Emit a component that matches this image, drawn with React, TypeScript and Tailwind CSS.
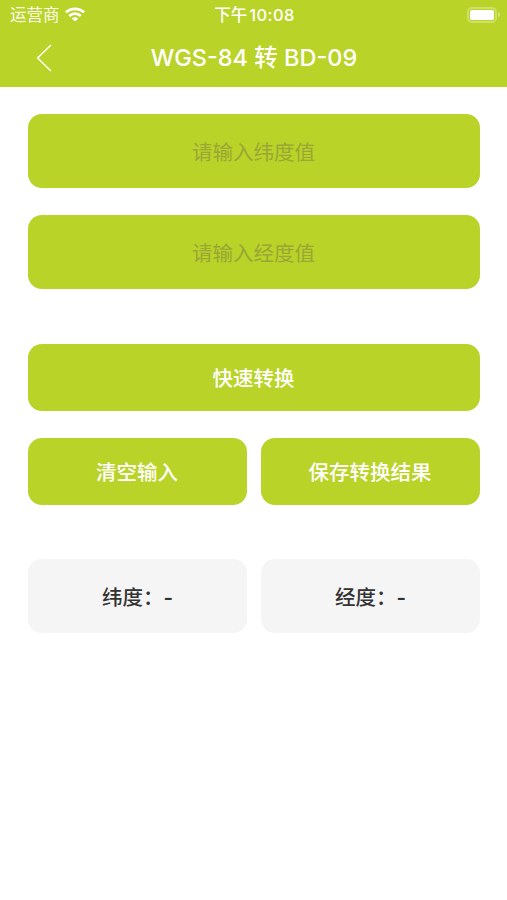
import type { ReactNode } from "react";

function WifiIcon() {
  return (
    <svg className="h-[15px] w-[20px]" viewBox="0 0 20 15" fill="none" stroke="white" strokeWidth="2.7">
      <path d="M0.9 5.3C6 0.6 14 0.6 19.1 5.3" />
      <path d="M4.2 8.9C7.4 5.9 12.6 5.9 15.8 8.9" />
      <path d="M10 14.6L6.8 11.4C8.5 9.8 11.5 9.8 13.2 11.4Z" fill="white" stroke="none" />
    </svg>
  );
}

function Battery() {
  return (
    <div className="flex items-center gap-px">
      <div className="h-[16px] w-[30px] rounded-[5px] border-2 border-white/30 p-px">
        <div className="h-full w-full rounded-[2px] bg-white" />
      </div>
      <div className="h-[5px] w-[2px] rounded-r-full bg-white/35" />
    </div>
  );
}

function StatusBar() {
  return (
    <div className="grid h-[29px] grid-cols-3 items-center pr-[7px] pl-[10px] text-[16.5px] leading-none">
      <div className="flex items-center gap-[5px]">
        <span className="pt-[2px] text-white/90">运营商</span>
        <WifiIcon />
      </div>
      <div className="flex items-center justify-center gap-[2px] pt-[2px] pr-px font-medium whitespace-nowrap">
        <span>下午</span>
        <span className="tracking-[0.4px]">10:08</span>
      </div>
      <div className="flex justify-end">
        <Battery />
      </div>
    </div>
  );
}

function Button({ children }: { children: ReactNode }) {
  return (
    <button className="h-[67px] w-full rounded-[14px] bg-[#bad328] pt-[3px] pr-px font-medium text-white">{children}</button>
  );
}

function Field({ placeholder }: { placeholder: string }) {
  return (
    <input
      className="block h-[74px] w-full rounded-[14px] bg-[#bad328] pt-[2px] pr-px text-center text-[#2b3520] outline-none placeholder:text-[#98a735]"
      placeholder={placeholder}
    />
  );
}

function Result({ label }: { label: string }) {
  return (
    <div className="flex h-[74px] items-center justify-center rounded-[14px] bg-[#f5f5f5] pt-[4px] font-medium text-[#333333]">
      <span>{label}：</span>
      <span className="font-semibold">-</span>
    </div>
  );
}

export default function App() {
  return (
    <div className="min-h-screen bg-white font-[Inter,'Noto_Sans_CJK_SC',sans-serif]">
      <header className="h-[87px] bg-[#bad328] text-white">
        <StatusBar />
        <div className="grid h-[57px] grid-cols-[60px_1fr_60px] items-center">
          <button className="flex justify-end pr-[8px]" aria-label="返回">
            <svg className="h-[28px] w-[16px]" viewBox="0 0 16 28" fill="none" stroke="white" strokeWidth="1.4">
              <path d="M15 1L1.6 14L15 27" />
            </svg>
          </button>
          <h1 className="pt-px pl-px text-center text-[23.5px] font-medium whitespace-nowrap">WGS-84 转 BD-09</h1>
        </div>
      </header>
      <main className="pt-[27px] pr-[27px] pl-[28px] text-[20.5px]">
        <div className="flex flex-col gap-[27px]">
          <Field placeholder="请输入纬度值" />
          <Field placeholder="请输入经度值" />
        </div>
        <div className="mt-[55px] flex flex-col gap-[27px]">
          <Button>快速转换</Button>
          <div className="grid grid-cols-2 gap-[14px]">
            <Button>清空输入</Button>
            <Button>保存转换结果</Button>
          </div>
        </div>
        <div className="mt-[54px] grid grid-cols-2 gap-[14px]">
          <Result label="纬度" />
          <Result label="经度" />
        </div>
      </main>
    </div>
  );
}
